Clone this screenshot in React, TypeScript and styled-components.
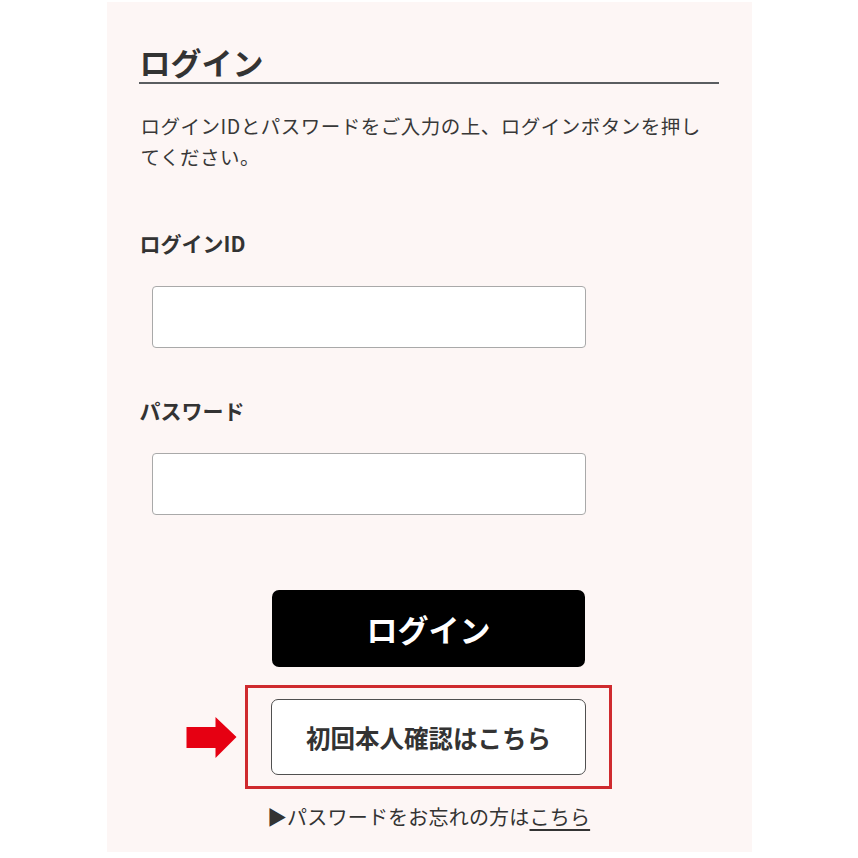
import styled, { createGlobalStyle } from 'styled-components'

const GlobalStyle = createGlobalStyle`
  body {
    margin: 0;
    background: #ffffff;
    font-family: "Noto Sans CJK JP", "Noto Sans", sans-serif;
    color: #333333;
  }
`

const LoginPage = (): JSX.Element => {
  return (
    <Page>
      <GlobalStyle />
      <Panel>
        <Heading>ログイン</Heading>
        <Description>
          ログインIDとパスワードをご入力の上、ログインボタンを押してください。
        </Description>

        <Label>ログインID</Label>
        <TextInput type="text" />

        <Label $gap={47}>パスワード</Label>
        <TextInput type="password" />

        <LoginButton type="button">ログイン</LoginButton>

        <Highlight>
          <Arrow viewBox="0 0 50 41">
            <polygon points="0,10 29,10 29,0 50,20 29,41 29,31 0,31" fill="#e60012" />
          </Arrow>
          <OutlineButton type="button">初回本人確認はこちら</OutlineButton>
        </Highlight>

        <Forgot>
          ▶パスワードをお忘れの方は<ForgotLink href="#">こちら</ForgotLink>
        </Forgot>
      </Panel>
    </Page>
  )
}

const Page = styled.div`
  display: flex;
  justify-content: center;
  padding-top: 2px;
`

const Panel = styled.div`
  width: 645px;
  height: 850px;
  box-sizing: border-box;
  padding: 40px 33px 0 32px;
  background: #fdf6f5;
  display: flex;
  flex-direction: column;
`

const Heading = styled.h1`
  margin: 0;
  font-size: 31px;
  line-height: 40px;
  font-weight: 700;
  color: #333;
  border-bottom: 2px solid #5a5d60;
  padding-left: 1px;
`

const Description = styled.p`
  margin: 26px 0 0;
  padding: 0 10px 0 2px;
  font-size: 19.5px;
  letter-spacing: 0.5px;
  line-height: 31px;
  color: #383838;
`

const Label = styled.div<{ $gap?: number }>`
  margin-top: ${({ $gap }) => $gap ?? 56}px;
  padding-left: 1px;
  font-size: 21px;
  line-height: 30px;
  font-weight: 700;
  color: #333;
`

const TextInput = styled.input`
  margin: 28px 0 0 13px;
  width: 434px;
  height: 62px;
  box-sizing: border-box;
  border: 1.5px solid #a9a9a9;
  border-radius: 4px;
  background: #fff;
  outline: none;
`

const LoginButton = styled.button`
  align-self: center;
  margin-top: 75px;
  width: 313px;
  height: 77px;
  border: none;
  border-radius: 7px;
  background: #000;
  color: #fff;
  font-family: inherit;
  font-size: 31px;
  font-weight: 700;
  cursor: pointer;
`

const Highlight = styled.div`
  position: relative;
  align-self: center;
  margin-top: 18px;
  width: 367px;
  height: 104px;
  box-sizing: border-box;
  border: 3px solid #cf2a2e;
  display: flex;
  align-items: center;
  justify-content: center;
`

const Arrow = styled.svg`
  position: absolute;
  left: -62px;
  top: 29px;
  width: 51px;
  height: 41px;
`

const OutlineButton = styled.button`
  width: 315px;
  height: 76px;
  box-sizing: border-box;
  border: 1.5px solid #505050;
  border-radius: 7px;
  background: #fff;
  color: #333;
  font-family: inherit;
  font-size: 24.5px;
  font-weight: 700;
  cursor: pointer;
`

const Forgot = styled.div`
  align-self: center;
  margin-top: 13px;
  font-size: 20px;
  letter-spacing: 0.2px;
  line-height: 30px;
  color: #333;
`

const ForgotLink = styled.a`
  color: #333;
  text-decoration: underline;
  text-underline-offset: 4px;
`

export default LoginPage
